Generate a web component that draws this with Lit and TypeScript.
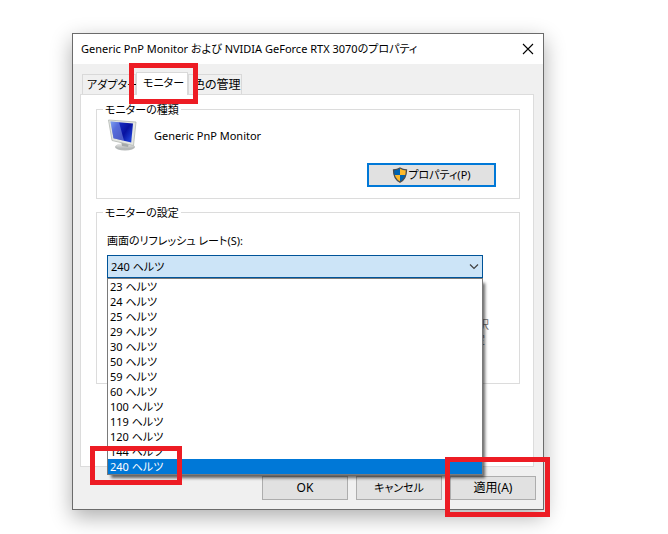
import { LitElement, html, css } from "lit";
import { customElement, state } from "lit/decorators.js";
import { classMap } from "lit/directives/class-map.js";

const RATES = [23, 24, 25, 29, 30, 50, 59, 60, 100, 119, 120, 144, 240];
const TABS = ["アダプター", "モニター", "色の管理"];

@customElement("app-root")
export class AppRoot extends LitElement {
  @state() private rate = 240;
  @state() private tab = 1;

  static styles = css`
    :host {
      display: block;
      min-height: 100vh;
      box-sizing: border-box;
      padding: 33px 124px 24px 72px;
      background: #fff;
      color: #000;
      font: 11px/16px "Noto Sans", "Noto Sans CJK JP", sans-serif;
      font-feature-settings: "palt";
    }
    *, *::before, *::after { box-sizing: border-box; }
    button, select, input {
      font: inherit;
      font-feature-settings: inherit;
      color: inherit;
      margin: 0;
      border-radius: 0;
    }
    .window {
      border: 1px solid #6b6b6b;
      background: #f0f0f0;
      box-shadow: 0 7px 20px rgba(0, 0, 0, 0.32);
    }
    .titlebar {
      display: flex;
      align-items: center;
      justify-content: space-between;
      height: 30px;
      padding: 0 0 0 8px;
      background: #fff;
    }
    .title { margin: 0; font-size: 11px; font-weight: 400; white-space: nowrap; }
    .close {
      display: grid;
      place-items: center;
      width: 30px;
      height: 30px;
      padding: 0;
      border: 0;
      background: none;
    }
    .body { padding: 8px 9px 9px 7px; }
    .tabs {
      display: flex;
      align-items: flex-end;
      padding-left: 2px;
    }
    .tab {
      position: relative;
      height: 20px;
      width: 54px;
      padding: 0 0 0 4px;
      border: 1px solid #d9d9d9;
      border-bottom: 0;
      background: #f0f0f0;
      line-height: 16px;
      text-align: left;
      white-space: nowrap;
    }
    .tab.wide-glyphs, .action.wide-glyphs { font-size: 12px; }
    .tab.active {
      z-index: 1;
      width: 52px;
      height: 23px;
      margin-bottom: -1px;
      padding: 0 0 3px 6px;
      background: #fff;
    }
    .panel {
      padding: 5px 13px 82px 15px;
      border: 1px solid #dcdcdc;
      background: #fff;
    }
    .group {
      min-width: 0;
      margin: 0;
      padding: 0 23px 11px 10px;
      border: 1px solid #dcdcdc;
    }
    .group + .group { margin-top: 4px; padding: 0 36px 36px 10px; }
    .legend { margin-left: -4px; padding: 2px 2px 0; }
    .device { display: flex; align-items: flex-start; gap: 16px; height: 45px; }
    .monitor { flex: none; width: 31px; height: 34px; }
    .device-name { margin: 10px 0 0; }
    .properties {
      display: flex;
      align-items: center;
      justify-content: center;
      width: 129px;
      height: 24px;
      margin-left: auto;
      padding: 0;
      border: 2px solid #0078d7;
      background: #e1e1e1;
    }
    .field-label { display: block; margin: 12px 0 6px; }
    .combo { position: relative; }
    .select {
      display: block;
      width: 100%;
      height: 23px;
      padding: 0 3px;
      border: 1px solid #005499;
      background: #cce4f7;
      appearance: none;
      outline: 0;
    }
    .chevron {
      position: absolute;
      top: 8px;
      right: 4px;
      pointer-events: none;
    }
    .list {
      position: absolute;
      z-index: 2;
      top: 100%;
      left: 0;
      right: 0;
      margin: 0;
      padding: 0;
      border: 1px solid #7a7a7a;
      background: #fff;
      box-shadow: 3px 4px 3px -1px rgba(0, 0, 0, 0.6);
      list-style: none;
    }
    .option {
      position: relative;
      height: 15px;
      padding-left: 2px;
      line-height: 15px;
    }
    .option.selected { background: #0078d7; color: #fff; }
    .note {
      margin: 39px -6px 0 0;
      color: #6d6d6d;
      line-height: 15px;
      text-align: right;
    }
    .note-end { display: block; padding-right: 4px; }
    .actions {
      display: flex;
      justify-content: flex-end;
      gap: 8px;
      margin: 9px -2px 0 0;
    }
    .action {
      position: relative;
      width: 86px;
      height: 24px;
      padding: 0;
      border: 1px solid #adadad;
      background: #e1e1e1;
    }
    .mark {
      position: absolute;
      z-index: 3;
      border: 5px solid #ed1c24;
      pointer-events: none;
    }
    .mark-tab { inset: -10px -11px -9px -8px; }
    .mark-option { top: -13px; bottom: -11px; left: -18px; width: 92px; }
    .mark-action { inset: -20px -15px -18px -6px; }
  `;

  private onSelect(e: Event) {
    this.rate = Number((e.target as HTMLSelectElement).value);
  }

  render() {
    return html`
      <main class="window">
        <header class="titlebar">
          <h1 class="title">Generic PnP Monitor および NVIDIA GeForce RTX 3070のプロパティ</h1>
          <button class="close" aria-label="閉じる">
            <svg width="12" height="12" viewBox="0 0 12 12" fill="none" stroke="#000" stroke-width="1.1">
              <path d="M1 1L11 11M11 1L1 11" />
            </svg>
          </button>
        </header>
        <div class="body">
          <div class="tabs" role="tablist">
            ${TABS.map((name, i) => html`
              <button
                class=${classMap({ tab: true, active: i === this.tab, "wide-glyphs": i === 2 })}
                role="tab"
                aria-selected=${i === this.tab}
                @click=${() => (this.tab = i)}
              >${name}${i === 1 ? html`<span class="mark mark-tab"></span>` : ""}</button>`)}
          </div>
          <section class="panel" role="tabpanel">
            <fieldset class="group">
              <legend class="legend">モニターの種類</legend>
              <div class="device">
                ${this.monitorIcon()}
                <p class="device-name">Generic PnP Monitor</p>
              </div>
              <button class="properties">${this.shieldIcon()}プロパティ(P)</button>
            </fieldset>
            <fieldset class="group">
              <legend class="legend">モニターの設定</legend>
              <label class="field-label" for="rate">画面のリフレッシュ レート(S):</label>
              <div class="combo">
                <select class="select" id="rate" @change=${this.onSelect}>
                  ${RATES.map((r) => html`<option value=${r} ?selected=${r === this.rate}>${r} ヘルツ</option>`)}
                </select>
                <svg class="chevron" width="10" height="8" viewBox="0 0 10 8" fill="none" stroke="#404040" stroke-width="1.2">
                  <path d="M1 1.5L5 5.5L9 1.5" />
                </svg>
                <ul class="list" role="listbox" aria-label="画面のリフレッシュ レート">
                  ${RATES.map((r) => html`
                    <li
                      class=${classMap({ option: true, selected: r === this.rate })}
                      role="option"
                      aria-selected=${r === this.rate}
                      @click=${() => (this.rate = r)}
                    >${r} ヘルツ${r === 240 ? html`<span class="mark mark-option"></span>` : ""}</li>`)}
                </ul>
              </div>
              <p class="note">択<span class="note-end">定</span></p>
            </fieldset>
          </section>
          <footer class="actions">
            <button class="action wide-glyphs">OK</button>
            <button class="action">キャンセル</button>
            <button class="action wide-glyphs">適用(A)<span class="mark mark-action"></span></button>
          </footer>
        </div>
      </main>
    `;
  }

  private monitorIcon() {
    return html`
      <svg class="monitor" viewBox="0 0 31 34" aria-hidden="true">
        <defs>
          <linearGradient id="screen" x1="0" y1="0" x2="1" y2="0.6">
            <stop offset="0" stop-color="#5d86e8" />
            <stop offset="0.3" stop-color="#1a2fc4" />
            <stop offset="0.7" stop-color="#0812a0" />
            <stop offset="1" stop-color="#1c3cd0" />
          </linearGradient>
          <linearGradient id="base" x1="0" y1="0" x2="0" y2="1">
            <stop offset="0" stop-color="#f2f2f0" />
            <stop offset="1" stop-color="#aeb2b2" />
          </linearGradient>
        </defs>
        <ellipse cx="18" cy="29" rx="10" ry="3.5" fill="#b4b8b8" />
        <ellipse cx="18" cy="28" rx="9" ry="3" fill="url(#base)" />
        <path d="M14 22L22 25L21 29L15 28Z" fill="#a5a9a9" />
        <path d="M1.5 2L29 4L26.5 27.5L5 22.5Z" fill="#e4e6e2" stroke="#b3b7b2" stroke-width="0.8" />
        <path d="M3.5 3.5L26 5.5L24.2 24.5L6.5 20.3Z" fill="url(#screen)" />
        <path d="M3.5 3.5L12 4.3L17 22.8L6.5 20.3Z" fill="#b4caff" opacity="0.4" />
      </svg>`;
  }

  private shieldIcon() {
    return html`
      <svg width="16" height="16" viewBox="0 0 16 16" aria-hidden="true">
        <clipPath id="shield"><path d="M8 1C6 2.3 3.8 2.8 1.5 2.8C1.5 8 2.7 12.6 8 15.2C13.3 12.6 14.5 8 14.5 2.8C12.2 2.8 10 2.3 8 1Z" /></clipPath>
        <g clip-path="url(#shield)">
          <path d="M0 0H8V8H0ZM8 8H16V16H8Z" fill="#0063b1" />
          <path d="M8 0H16V8H8ZM0 8H8V16H0Z" fill="#fdb92b" />
        </g>
        <path d="M8 1C6 2.3 3.8 2.8 1.5 2.8C1.5 8 2.7 12.6 8 15.2C13.3 12.6 14.5 8 14.5 2.8C12.2 2.8 10 2.3 8 1Z" fill="none" stroke="#4a4d50" stroke-width="1.3" />
      </svg>`;
  }
}
